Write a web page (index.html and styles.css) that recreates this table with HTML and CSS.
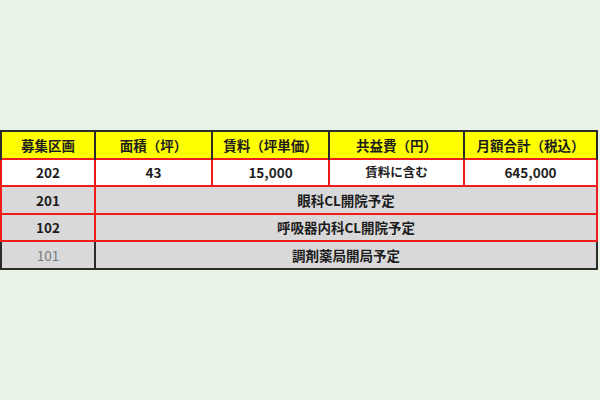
FILE: index.html
```html
<!DOCTYPE html>
<html lang="ja">
<head>
<meta charset="utf-8">
<link rel="stylesheet" href="styles.css">
</head>
<body>
<div class="page">
  <table class="plan">
    <colgroup>
      <col class="c1"><col class="c2"><col class="c3"><col class="c4"><col class="c5">
    </colgroup>
    <thead>
      <tr class="head">
        <th>募集区画</th>
        <th>面積（坪）</th>
        <th>賃料（坪単価）</th>
        <th>共益費（円）</th>
        <th>月額合計（税込）</th>
      </tr>
    </thead>
    <tbody>
      <tr class="row open">
        <td>202</td>
        <td>43</td>
        <td>15,000</td>
        <td class="small">賃料に含む</td>
        <td>645,000</td>
      </tr>
      <tr class="row taken hl">
        <td>201</td>
        <td colspan="4">眼科CL開院予定</td>
      </tr>
      <tr class="row taken hl">
        <td>102</td>
        <td colspan="4">呼吸器内科CL開院予定</td>
      </tr>
      <tr class="row taken">
        <td class="dim">101</td>
        <td colspan="4">調剤薬局開局予定</td>
      </tr>
    </tbody>
  </table>
</div>
</body>
</html>
```

FILE: styles.css
```css
html, body {
  margin: 0;
  padding: 0;
  background: #e8f3e6;
}
.page {
  width: 600px;
  height: 400px;
  padding-top: 130px;
  box-sizing: border-box;
}
.plan {
  border-collapse: collapse;
  table-layout: fixed;
  width: 598px;
  font-family: "Noto Sans CJK JP", "Noto Sans", sans-serif;
  font-size: 13.5px;
  font-weight: bold;
  color: #1c1c1c;
}
.c1 { width: 94px; }
.c2 { width: 117px; }
.c3 { width: 117px; }
.c4 { width: 135px; }
.c5 { width: 133px; }
.plan th, .plan td {
  border: 2px solid #2b2b2b;
  text-align: center;
  vertical-align: middle;
  padding: 0;
  line-height: 16px;
}
.head th {
  background: #ffff00;
  height: 25.5px;
  border-bottom: none;
}
.row td {
  height: 25.5px;
}
.open td {
  background: #ffffff;
  border-color: #ee1c1c;
}
.taken td {
  background: #d9d9d9;
}
.hl td {
  border-color: #ee1c1c;
}
.small {
  font-size: 12.5px;
}
.dim {
  color: #7a7a7a;
  font-weight: normal;
}
```
